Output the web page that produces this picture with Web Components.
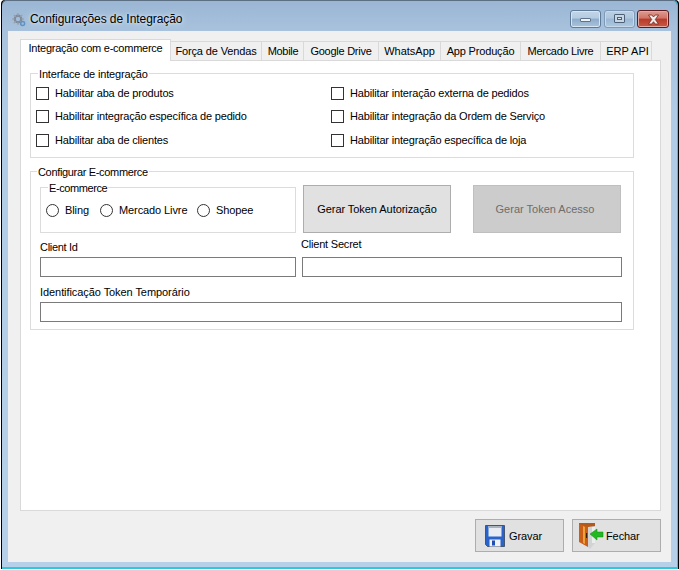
<!DOCTYPE html>
<html lang="pt"><head><meta charset="utf-8"><title>Configurações de Integração</title>
<style>
html,body{margin:0;padding:0;background:#fff;width:679px;height:570px;overflow:hidden;font:11px "Liberation Sans",Arial,sans-serif;color:#000}
</style></head><body>
<app-window>
  <win-titlebar slot="title">Configurações de Integração</win-titlebar>
  <win-tabs>
    <win-tab active style="width:151px;letter-spacing:-.24px">Integração com e-commerce</win-tab><win-tab style="width:91px;letter-spacing:-.13px">Força de Vendas</win-tab><win-tab style="width:42px;letter-spacing:-.3px;padding-left:1px">Mobile</win-tab><win-tab style="width:75px;letter-spacing:-.25px">Google Drive</win-tab><win-tab style="width:62px">WhatsApp</win-tab><win-tab style="width:80px;letter-spacing:-.17px">App Produção</win-tab><win-tab style="width:80px;letter-spacing:-.3px">Mercado Livre</win-tab><win-tab style="width:51px;padding-left:3px">ERP API</win-tab>
    <integration-page slot="page"></integration-page>
  </win-tabs>
  <win-footer slot="footer"></win-footer>
</app-window>
<script>
function def(name, css, html, init){
  customElements.define(name, class extends HTMLElement{
    constructor(){super();const r=this.attachShadow({mode:'open'});r.innerHTML='<style>'+css+'</style>'+(typeof html==='function'?html(this):html);}
    connectedCallback(){ if(init) init(this); }
  });
}
def('app-window',`
:host{display:block;width:679px;height:570px;box-sizing:border-box;background:#fff;padding-left:1px}
.black{background:#000;padding:0 0 0 1px;box-sizing:border-box;border-radius:4px 4px 0 0;height:569px}
.frame{box-sizing:border-box;width:676px;height:569px;padding:1px 6px 5px 6px;border-radius:5px 5px 0 0;
 border-right:1px solid #33c6e6;border-bottom:2px solid #2fc8d8;
 display:flex;flex-direction:column;
 background:linear-gradient(180deg,#9ab6d4 0,#a8c2dd 31px,#b0cbe5 110px,#b6d0e9 100%);
 box-shadow:inset 0 1px 0 #5d6f82}
.client{flex:1;background:#f0f0f0;padding:8px 11px 0 12px;display:flex;flex-direction:column}
`,`<div class="black"><div class="frame"><slot name="title"></slot><div class="client"><slot></slot><slot name="footer"></slot></div></div></div>`);

def('win-titlebar',`
:host{display:flex;height:30px;flex:none;font-size:12px;color:#000;letter-spacing:-.06px}
.ico{width:14px;height:14px;margin:12px 4px 0 4px;flex:none}
.t{flex:1;text-shadow:0 0 6px #dfeaf4,0 0 3px #dfeaf4;margin-top:11px;line-height:15px}
.btns{display:flex;gap:2px;margin:9px 2px 0 0;height:18px}
`,`<svg class="ico" viewBox="0 0 14 14">
 <g fill="none" stroke-linecap="round">
 <circle cx="6" cy="6" r="3.300" stroke="#7f8a9a" stroke-width="2.200"/>
 <path d="M6 .7v1.200M6 10.100v1.200M.7 6h1.200M10.100 6h1.200M2.300 2.300l.9.9M8.800 8.800l.9.9M2.300 9.700l.9-.9M8.800 3.200l.9-.9" stroke="#98a2af" stroke-width="1.500"/>
 <circle cx="10.600" cy="10.600" r="2" stroke="#5f93c4" stroke-width="1.500"/>
 </g></svg><span class="t"><slot></slot></span>
 <span class="btns"><caption-btn kind="min"></caption-btn><caption-btn kind="max" style="margin-left:1px"></caption-btn><caption-btn kind="close" style="width:32px"></caption-btn></span>`);

def('caption-btn',`
:host{display:flex;align-items:center;justify-content:center;box-sizing:border-box;height:18px;width:31px;border-radius:3px;border:1px solid #5f7a99;
 background:linear-gradient(180deg,#c4d6e8 0,#b3cbe2 45%,#8eabc9 50%,#a8c4de 100%);box-shadow:inset 0 0 0 1px #d9e5f0}
:host([kind=max]){border-color:#7f9ab6;background:linear-gradient(180deg,#bcd0e4 0,#aec6de 45%,#9ab7d3 50%,#aecae3 100%);box-shadow:inset 0 0 0 1px #c9d9e8}
:host([kind=close]){border-color:#5e1b1f;background:linear-gradient(180deg,#dc9c92 0,#d17365 45%,#b73a2c 50%,#c85a43 100%);box-shadow:inset 0 0 0 1px #e2aaa2}
.min{width:11px;height:4px;background:#eef3f8;border:1px solid #5f7288;border-radius:1px;box-sizing:border-box;margin-top:2px}
.max{width:11px;height:9px;border:1px solid #4d6078;background:#c5d6e6;box-sizing:border-box;display:flex;align-items:center;justify-content:center;border-radius:1px;margin-top:-2px}
.max i{display:block;width:5px;height:3px;background:#dfe9f2;border:1px solid #4d6078;box-sizing:border-box}
svg{display:block}
`,h=>{const k=h.getAttribute('kind');
 if(k==='min')return '<div class="min"></div>';
 if(k==='max')return '<div class="max"><i></i></div>';
 return '<svg width="15" height="11" viewBox="0 0 15 11"><path d="M2.500 1h3.300l1.700 2 1.700-2h3.300L9.300 5.500l3.200 4.500H9.200L7.500 7.700 5.800 10H2.500l3.200-4.500z" fill="#f3ecea" stroke="#6c2a25" stroke-width=".8"/></svg>';
});

def('win-tabs',`
:host{display:block;width:641px;flex:none}
.strip{display:flex;height:21px;align-items:flex-end;position:relative;z-index:1}
.page{box-sizing:border-box;height:451px;background:#fff;border:1px solid #d9d9d9}
`,`<div class="strip"><slot></slot></div><div class="page"><slot name="page"></slot></div>`);

def('win-tab',`
:host{display:block;box-sizing:border-box;height:19px;line-height:18px;text-align:center;background:#f0f0f0;border:1px solid #d9d9d9;border-left:0;border-bottom:0;white-space:nowrap;color:#000}
:host([active]){height:22px;margin-bottom:-1px;background:#fff;line-height:17px;border-left:1px solid #d9d9d9}
`,`<slot></slot>`);

def('integration-page',`
:host{display:block;padding:12px 26px 0 9px}
.rows{display:grid;grid-template-columns:295px 1fr;padding:8px 0 0 5px;height:71px;box-sizing:border-box;letter-spacing:-.17px;grid-auto-rows:23.300px}
.g2{margin-top:13px}
.top{display:flex;padding:13px 0 0 9px}
.radios{display:flex;align-items:center;height:45px;padding:0 0 0 5px;box-sizing:border-box;letter-spacing:-.1px}
.btn1{margin-left:7px;letter-spacing:-.06px}.btn2{margin-left:22px;padding-right:4px}
.fields{display:grid;grid-template-columns:256px 320px;column-gap:6px;padding:0 0 7px 9px}
.full{grid-column:1 / 3;margin-top:5px}
`,`<win-group style="height:85px" legend="Interface de integração" lx="7" ls="-.17">
   <div class="rows">
    <win-check>Habilitar aba de produtos</win-check><win-check>Habilitar interação externa de pedidos</win-check>
    <win-check>Habilitar integração específica de pedido</win-check><win-check>Habilitar integração da Ordem de Serviço</win-check>
    <win-check>Habilitar aba de clientes</win-check><win-check>Habilitar integração específica de loja</win-check>
   </div></win-group>
  <win-group class="g2" legend="Configurar E-commerce" lx="6" ls="-.33">
   <div class="top">
    <win-group style="width:256px;height:46px;margin-top:2px" legend="E-commerce" lx="7" ls="-.4">
      <div class="radios"><win-radio style="width:54px">Bling</win-radio><win-radio style="width:97px">Mercado Livre</win-radio><win-radio>Shopee</win-radio></div>
    </win-group>
    <win-button class="btn1" style="width:148px;height:48px">Gerar Token Autorização</win-button>
    <win-button class="btn2" disabled style="width:148px;height:48px">Gerar Token Acesso</win-button>
   </div>
   <div class="fields">
    <win-field label="Client Id" lh="24" pt="8" ls="-.3"></win-field>
    <win-field label="Client Secret" lh="24" pt="5" ls="-.2" up></win-field>
    <win-field class="full" label="Identificação Token Temporário" lh="20" pt="4" ls="-.07"></win-field>
   </div></win-group>`);

def('win-group',`
:host{display:block;box-sizing:border-box;border:1px solid #dcdcdc;position:relative;background:#fff}
.lg{position:absolute;top:-6px;background:#fff;padding:0 1px;line-height:13px;white-space:nowrap}
`,h=>`<span class="lg" style="left:${h.getAttribute('lx')}px;letter-spacing:${h.getAttribute('ls')}px">${h.getAttribute('legend')}</span><slot></slot>`);

def('win-check',`
:host{display:flex;align-items:center;white-space:nowrap}
i{display:block;box-sizing:border-box;width:13px;height:13px;border:1px solid #333;background:#fff;margin-right:6px;flex:none}
span{margin-top:-1px}
`,`<i></i><span><slot></slot></span>`);

def('win-radio',`
:host{display:flex;align-items:center;white-space:nowrap}
i{display:block;box-sizing:border-box;width:13px;height:13px;border:1px solid #333;border-radius:50%;background:#fff;margin-right:6px;flex:none}
span{margin-top:-1px}
`,`<i></i><span><slot></slot></span>`);

def('win-button',`
:host{display:flex;align-items:center;justify-content:center;box-sizing:border-box;background:#e1e1e1;border:1px solid #adadad;white-space:nowrap;color:#000;flex:none}
:host([disabled]){background:#cccccc;border-color:#bfbfbf;color:#6d6d6d}
`,`<slot></slot>`);

def('win-field',`
:host{display:block}
.l{display:block;line-height:13px;white-space:nowrap;box-sizing:border-box}
.b{display:block;box-sizing:border-box;height:20px;background:#fff;border:1px solid #7a7a7a}
`,h=>{const up=h.hasAttribute('up');
 return `<span class="l" style="height:${h.getAttribute('lh')}px;padding-top:${h.getAttribute('pt')}px;letter-spacing:${h.getAttribute('ls')}px;margin-left:${up?-1:0}px">${h.getAttribute('label')}</span><span class="b"></span>`});

def('win-footer',`
:host{display:flex;justify-content:flex-end;gap:8px;padding:8px 0 0 0;width:641px;flex:none}
svg{flex:none}
`,`<win-button style="width:89px;height:33px;justify-content:flex-start;padding-left:9px">
 <svg width="20" height="22" viewBox="0 0 20 22">
  <path d="M.5.500h19v21H2.500l-2-2z" fill="#2a63c9" stroke="#46566f"/>
  <rect x="3.500" y="1" width="13" height="10.500" fill="#e9edf3"/><rect x="3.500" y="1" width="13" height="2" fill="#a9b3bf"/>
  <rect x="4.500" y="14.500" width="11" height="7" fill="#eef1f6"/><rect x="7" y="15.500" width="3" height="5" fill="#1d4fb4"/>
 </svg><span style="margin-left:4px;letter-spacing:-.1px">Gravar</span></win-button>
 <win-button style="width:89px;height:33px;justify-content:flex-start;padding-left:6px">
 <svg width="25" height="26" viewBox="0 0 25 26">
  <path d="M0 0h16v4H0z" fill="#b3591b"/><path d="M0 1l9 3v20l-9-5z" fill="#c95f17"/><path d="M4 3l2 1v17l-2-1z" fill="#eda33d"/><path d="M9 4l7-1v17l-5 6-2-2z" fill="#d2d3d5"/><path d="M13 4h3v16h-3z" fill="#eceded"/>
  <rect x="7" y="10" width="1.200" height="5" fill="#3a1c08"/>
  <path d="M11 11l7-5v3h6v5h-6v3z" fill="#22b822" stroke="#138a13" stroke-width=".5"/>
 </svg><span style="margin-left:2px;letter-spacing:-.1px">Fechar</span></win-button>`);
</script>
</body></html>
